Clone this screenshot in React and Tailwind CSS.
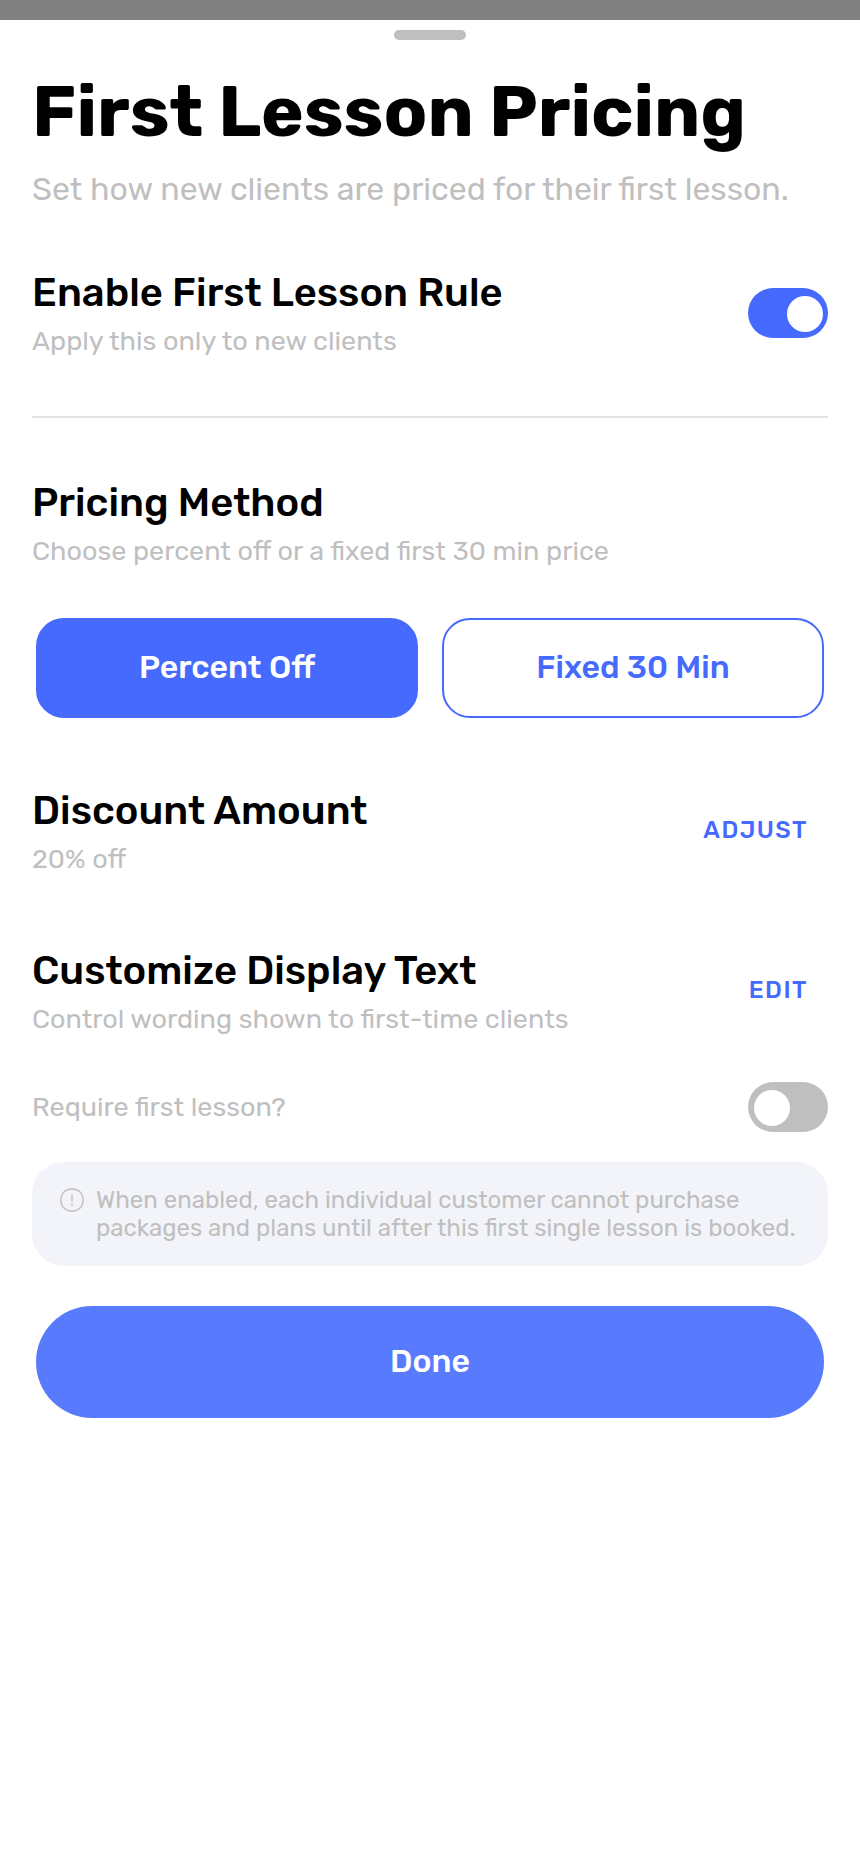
import { useState } from 'react';

function InfoIcon() {
  return (
    <svg viewBox="0 0 24 24" className="w-6 h-6 shrink-0" fill="none" stroke="currentColor" aria-hidden="true">
      <rect x="1" y="1" width="22" height="22" rx="10" strokeWidth="1.4" />
      <path d="M12 6.4v7.4" strokeWidth="1.4" />
      <path d="M12 15.8v1.7" strokeWidth="1.6" />
    </svg>
  );
}

function Toggle({ id, checked, onChange }) {
  return (
    <input
      id={id}
      type="checkbox"
      role="switch"
      checked={checked}
      onChange={(e) => onChange(e.target.checked)}
      className="appearance-none shrink-0 flex items-center w-20 h-[50px] pt-[2px] pl-[6px] pr-[5px] rounded-full cursor-pointer bg-[#bfbfbf] checked:bg-[#466afe] checked:justify-end before:content-[''] before:w-9 before:h-9 before:rounded-full before:bg-white"
    />
  );
}

function SettingRow({ title, description, htmlFor, children }) {
  return (
    <div className="flex items-center justify-between gap-4">
      <div>
        <h2 className="text-[40px] leading-[50px] font-medium text-black">
          {htmlFor ? <label htmlFor={htmlFor}>{title}</label> : title}
        </h2>
        <p className="mt-[6px] text-[27px] leading-[34px] text-[#bfbfbf]">{description}</p>
      </div>
      {children}
    </div>
  );
}

function TextButton({ label, children }) {
  return (
    <button type="button" aria-label={label} className="px-5 pt-3 pb-[14px] text-2xl font-medium tracking-[0.06em] text-[#466afe] cursor-pointer">
      {children}
    </button>
  );
}

function MethodButton({ active, onClick, children }) {
  const look = active ? 'bg-[#466afe] text-white' : 'bg-white text-[#466afe]';
  return (
    <button
      type="button"
      aria-pressed={active}
      onClick={onClick}
      className={`h-[100px] pb-[2px] rounded-[28px] border-2 border-[#466afe] text-[32px] font-medium cursor-pointer ${look}`}
    >
      {children}
    </button>
  );
}

export default function App() {
  const [enabled, setEnabled] = useState(true);
  const [required, setRequired] = useState(false);
  const [method, setMethod] = useState('percent');

  return (
    <div className="min-h-screen bg-[#808080] pt-5 font-['Rubik','Inter',sans-serif]">
      <main className="min-h-[calc(100vh-20px)] bg-white px-8 pt-[10px] pb-16">
        <div className="mx-auto w-[72px] h-[10px] rounded-full bg-[#bfbfbf]" />

        <header className="mt-8">
          <h1 className="text-[72px] leading-[80px] font-bold text-black">First Lesson Pricing</h1>
          <p className="mt-4 text-[32px] leading-[42px] text-[#bfbfbf]">
            Set how new clients are priced for their first lesson.
          </p>
        </header>

        <section className="mt-[58px]">
          <SettingRow title="Enable First Lesson Rule" description="Apply this only to new clients" htmlFor="enable-rule">
            <Toggle id="enable-rule" checked={enabled} onChange={setEnabled} />
          </SettingRow>
        </section>

        <hr className="mt-[58px] mb-[60px] border-t-2 border-[#e5e5e5]" />

        <section>
          <SettingRow title="Pricing Method" description="Choose percent off or a fixed first 30 min price" />
          <div className="mt-[50px] px-1 grid grid-cols-2 gap-6">
            <MethodButton active={method === 'percent'} onClick={() => setMethod('percent')}>
              Percent Off
            </MethodButton>
            <MethodButton active={method === 'fixed'} onClick={() => setMethod('fixed')}>
              Fixed 30 Min
            </MethodButton>
          </div>
        </section>

        <section className="mt-[68px] flex flex-col gap-[70px]">
          <SettingRow title="Discount Amount" description="20% off">
            <TextButton label="Adjust discount amount">ADJUST</TextButton>
          </SettingRow>
          <SettingRow title="Customize Display Text" description="Control wording shown to first-time clients">
            <TextButton label="Edit display text">EDIT</TextButton>
          </SettingRow>
        </section>

        <section className="mt-[46px]">
          <div className="flex items-center justify-between gap-4">
            <label htmlFor="require-first" className="text-[27px] leading-[34px] text-[#bfbfbf]">
              Require first lesson?
            </label>
            <Toggle id="require-first" checked={required} onChange={setRequired} />
          </div>
          <div className="mt-[30px] flex items-start gap-3 rounded-[32px] bg-[#f3f4f9] pl-7 pr-6 py-6 text-[#bfbfbf]">
            <span className="pt-[2px]">
              <InfoIcon />
            </span>
            <p className="text-2xl leading-7">
              When enabled, each individual customer cannot purchase packages and plans until after this first single
              lesson is booked.
            </p>
          </div>
        </section>

        <div className="mt-10 px-1">
          <button type="button" className="w-full h-28 pb-[2px] rounded-full bg-[#587bfd] text-[32px] font-medium text-white cursor-pointer">
            Done
          </button>
        </div>
      </main>
    </div>
  );
}
